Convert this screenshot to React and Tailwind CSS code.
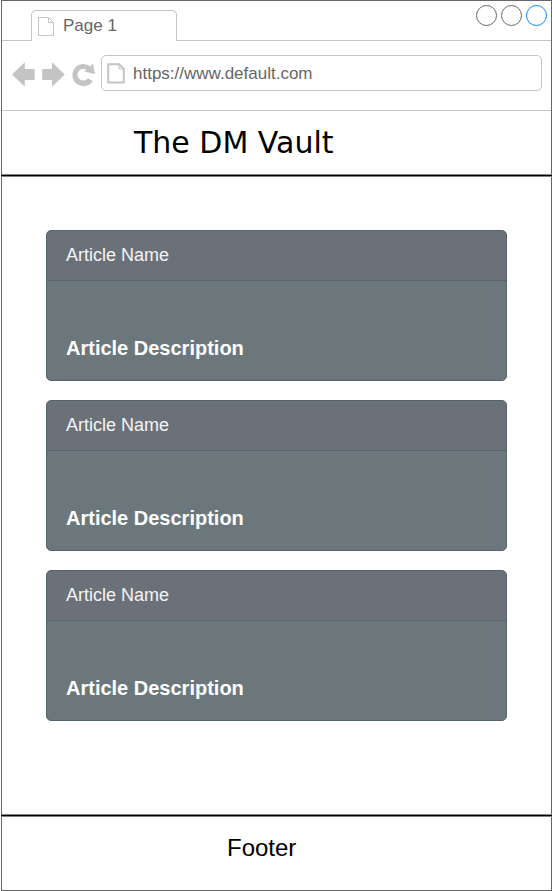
const articles = [1, 2, 3];

function Tabs() {
  return (
    <div className="flex h-10 shrink-0">
      <div className="w-[29px] border-b border-[#c4c4c4]" />
      <div className="mt-[9px] flex w-[146px] rounded-t-[5px] border border-b-0 border-[#c4c4c4] pl-1.5">
        <svg className="mt-1.5 h-[19px] w-4 shrink-0" viewBox="0 0 16 19" fill="none" stroke="#c4c4c4">
          <path d="M.5 .5H10.5L15.5 5.5V18.5H.5Z" />
          <path d="M10.5 .5V5.5H15.5" />
        </svg>
        <span className="ml-[9px] mt-[5px] text-[17px] leading-5">Page 1</span>
      </div>
      <div className="flex flex-1 justify-end gap-1 border-b border-[#c4c4c4] pr-1 pt-1">
        <span className="size-[21px] rounded-full border border-[#666]" />
        <span className="size-[21px] rounded-full border border-[#666]" />
        <span className="size-[21px] rounded-full border border-[#008cff]" />
      </div>
    </div>
  );
}

function AddressBar() {
  return (
    <div className="flex h-[70px] shrink-0 border-b border-[#c4c4c4] pl-[10px] pt-[14px]">
      <svg className="h-9 w-[84px] shrink-0" viewBox="0 0 84 36" fill="#c4c4c4">
        <path d="M0 19.5L12.8 7.3V14H22.6V25H12.8V31.7Z" />
        <path d="M52.8 19.5L40 7.3V14H30.2V25H40V31.7Z" />
        <path d="M78.5 11.5L80.8 8.3L83 19L72 16.5L74.5 14.8A5.8 5.8 0 1 0 76 23.2L80.7 26.3A11.1 11.1 0 1 1 78.5 11.5Z" />
      </svg>
      <div className="ml-[5px] flex h-9 w-[441px] rounded-[5px] border border-[#c4c4c4] pl-[5px]">
        <svg className="mt-[7px] h-[21px] w-[18px] shrink-0" viewBox="0 0 18 21" fill="none" stroke="#c4c4c4">
          <path d="M1.2 1.2H12L16.8 6V19.5H1.2Z" strokeWidth="2" />
          <path d="M12 1V6H17" />
        </svg>
        <span className="ml-2 mt-2 text-[17px] leading-5">https://www.default.com</span>
      </div>
    </div>
  );
}

function ArticleCard() {
  return (
    <article className="h-[151px] overflow-hidden rounded-[5px] border border-[#56646e] bg-[#6c777c] text-white">
      <h2 className="h-[50px] border-b border-[#56646e] bg-[#6b7179] pl-[19px] pt-[14px] text-[18px] leading-5 text-[#f4f4f5]">
        Article Name
      </h2>
      <p className="pl-[19px] pt-[55px] text-[20px] font-bold leading-6">Article Description</p>
    </article>
  );
}

export default function App() {
  return (
    <div className="h-[891px] w-[552px] bg-white pl-px font-['Liberation_Sans',Arial,sans-serif] text-[#666]">
      <div className="flex h-full flex-col border border-[#666]">
        <Tabs />
        <AddressBar />
        <header className="h-[63px] shrink-0 pl-[132px] pt-[14px] font-['DejaVu_Sans',Verdana,sans-serif] text-[30px] leading-9 text-black">
          The DM Vault
        </header>
        <div className="-mx-px h-[3px] shrink-0 border-y border-[#808080] bg-black" />
        <main className="flex flex-1 flex-col gap-[19px] pl-11 pr-11 pt-[53px]">
          {articles.map((id) => (
            <ArticleCard key={id} />
          ))}
        </main>
        <div className="-mx-px h-[3px] shrink-0 border-y border-[#808080] bg-black" />
        <footer className="h-[73px] shrink-0 pl-[225px] pt-[17px] text-[24px] leading-7 text-black">Footer</footer>
      </div>
    </div>
  );
}
